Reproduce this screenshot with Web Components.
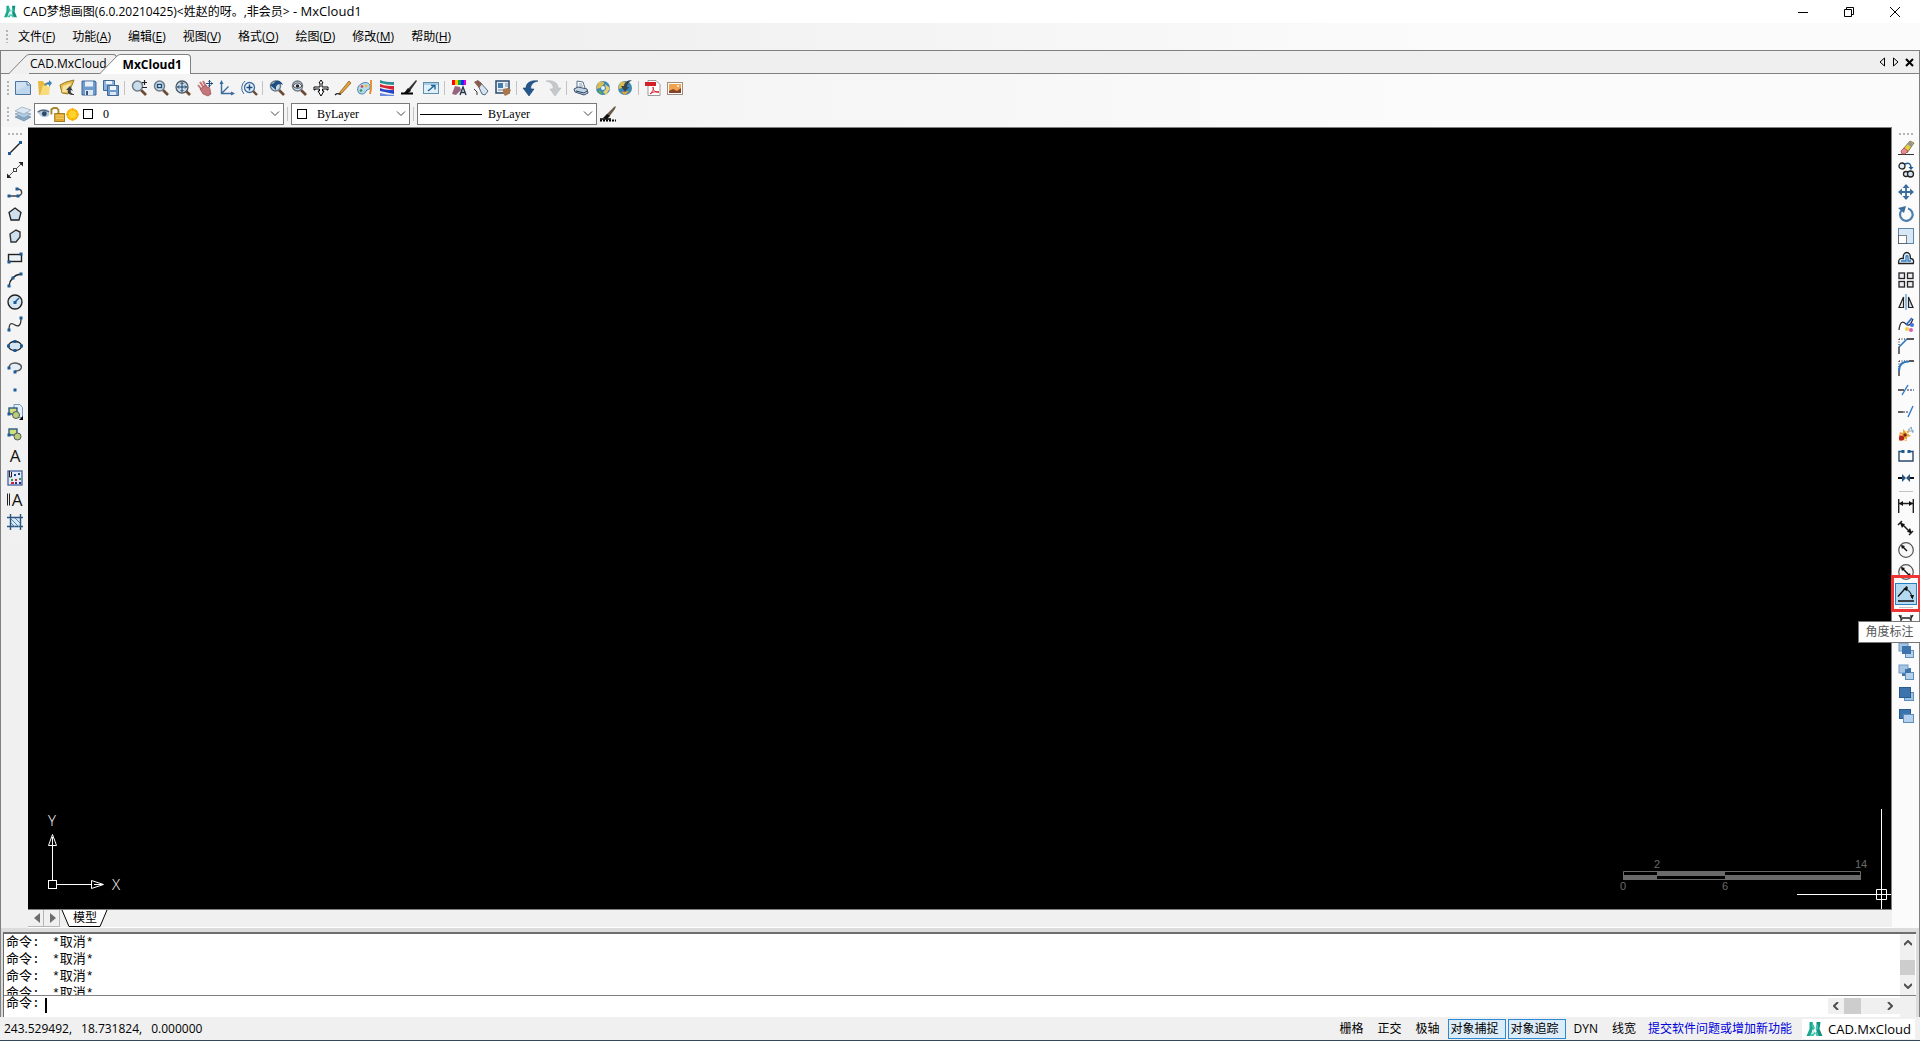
<!DOCTYPE html>
<html lang="zh-CN">
<head>
<meta charset="utf-8">
<title>CAD梦想画图</title>
<style>
  body {
    margin: 0;
    background: #f0f0f0;
    font-family: "Open Sans", "Noto Sans CJK SC", sans-serif;
    font-size: 12px;
    line-height: 16px;
    color: #000;
  }
</style>
</head>
<body>
<cad-app></cad-app>

<script>
// All icons are drawn on a 16x16 grid
const P = (x, y) => `<rect x="${x - 1.5}" y="${y - 1.5}" width="3" height="3" fill="#1d5b94"/>`;
const LENS = `<path d="M10 10l5 5" stroke="#6b4a32" stroke-width="2.6"/><circle cx="6.5" cy="6" r="5" fill="#c9dcea" stroke="#6f7c88" stroke-width="1.5"/>`;
const SHEETS = (a, b) => `<rect x="1" y="1" width="9" height="8" fill="${a}" stroke="#6d9ac6"/><rect x="7.5" y="8.5" width="8" height="7" fill="${b}" stroke="#5e8fbb"/>`;

const ICONS = {
  logo: `<path d="M3 1h3l1 5-3 9H0l3-7z" fill="#1aa890"/><path d="M10 1h4l-1 7 3 7h-4l-2-5z" fill="#14917f"/><path d="M6 1l6 14h-2L5 5zM11 3L4 15h3l5-8z" fill="#3cc2ab"/><path d="M7 2l2 5-3 6" stroke="#fff" stroke-width="1"/>`,
  new: `<path d="M.5 1.5h12l3 3v10H.5z" fill="#cfe2f4" stroke="#4f7499"/><path d="M1 11L13 5l2 1v8H1z" fill="#b3cfe8" opacity=".6"/><path d="M12 1.5v3.500h3.500" fill="#fff" stroke="#4f7499"/>`,
  open: `<path d="M1 1h5l1 2h3v12H2z" fill="#e7b93f"/><path d="M3 15l3-10 7 2-1 8z" fill="#f8dc7c"/><path d="M7 6c1-3 3-4 5-4V0l3 3-3 4V5c-2-1-3 0-5 1z" fill="#3f83b8"/>`,
  openWeb: `<path d="M1 5l6-3 8-2-2 5-4 9-6-1z" fill="#e4bd4b" stroke="#9b7a25"/><path d="M4 6l8-3-4 9-5 0z" fill="#f7e3a0"/><path d="M15 15c-5 0-7-2-6-5l-2 0 4-4 3 5-2-1c-1 2 1 4 3 4z" fill="#3a3f46"/>`,
  save: `<path d="M1 1h13l1 1v13H1z" fill="#6f9ccc" stroke="#3f6896"/><rect x="4" y="1.5" width="8" height="5" fill="#e8f1fa"/><rect x="4" y="10" width="8" height="5" fill="#dfe8f2"/><rect x="5" y="11" width="2" height="4" fill="#33577f"/>`,
  saveAll: `<path d="M.5.5h11v10H.5z" fill="#8fb4db" stroke="#3f6896"/><rect x="3" y="1" width="6" height="3" fill="#eef5fc"/><path d="M4.500 5.500h11v10h-11z" fill="#6f9ccc" stroke="#3f6896"/><rect x="7" y="6" width="6" height="4" fill="#eef5fc"/><rect x="7" y="12" width="6" height="3" fill="#dfe8f2"/>`,
  zoom: `${LENS}<path d="M13.500 0v5M11 2.500h5M11 7.500h5" stroke="#222" stroke-width="1.2"/>`,
  zoomWin: `${LENS}<rect x="4.5" y="4.5" width="4" height="3" fill="#fff" stroke="#1d4b7c" stroke-width="1.4"/>`,
  zoomAll: `<path d="M11 11l4 4" stroke="#6b4a32" stroke-width="2.6"/><circle cx="7" cy="7" r="6" fill="#c9dcea" stroke="#4d5964" stroke-width="1.3"/><path d="M7 2.500v9M2.500 7h9M5.500 4L7 2.500 8.500 4M5.500 10L7 11.500 8.500 10M4 5.500L2.500 7 4 8.500M10 5.500L11.500 7 10 8.500" stroke="#1d3f66"/>`,
  pan: `<path d="M1 5l4 5M3 2l4 6M6 1l3 6" stroke="#c5767a" stroke-width="2"/><path d="M3 9l6-4 1 2 2 0 1 2 1 5-3 2-5-2z" fill="#c5767a" stroke="#8b4347" stroke-width=".6"/><path d="M12.500 0v7M9 3.500h7" stroke="#1d4b7c"/><path d="M12.500 0l-1.500 2h3zM12.500 7l-1.500-2h3zM16 3.500l-2-1.500v3z" fill="#1d4b7c"/>`,
  ucs: `<path d="M2.500 2v11.500h12M2.500 13.500l7-7" stroke="#3c6d9f" stroke-width="1.4"/><path d="M2.500 0L.5 4h4zM16 13.500l-4-2v4z" fill="#3c6d9f"/>`,
  zoomIn: `<circle cx="8.5" cy="7.5" r="5" fill="#e8f3fc" stroke="#3c6d9f" stroke-width="1.3"/><path d="M12 11l4 4" stroke="#6b4a32" stroke-width="2.4"/><path d="M8.500 4.500v6M5.500 7.500h6" stroke="#1d4b7c" stroke-width="1.5"/><path d="M4 1a9 9 0 0 0-1 13" stroke="#3c6d9f"/>`,
  zoomPrev: `${LENS}<path d="M1 5l6 5V7c1-3 4-4 7-2-2-5-7-6-9-2z" fill="#1f4d80"/>`,
  zoomReal: `${LENS}<path d="M2 6c3-4 6-4 9 0-3 3-6 3-9 0z" fill="#eef" stroke="#444"/><circle cx="6.5" cy="6" r="1.7" fill="#222"/>`,
  move3d: `<path d="M8 0l2 3H9v4h6v3h-1V9H9.500v2H11l-3 5-3-5h1.500V9H2v1H1V7h6V3H6z" fill="#fff" stroke="#000"/>`,
  pencil: `<path d="M5 12L14 1l2 2-9 10-3 1z" fill="#e2a33b" stroke="#8f5d1d" stroke-width=".8"/><path d="M0 15c3-3 4 0 6-1" stroke="#222" stroke-width="1.3"/>`,
  palette: `<path d="M6 3c5-2 8 2 7 5 0 2-3 1-4 3-1 3-4 4-7 2C-1 9 1 5 6 3z" fill="#b6d8ee" stroke="#4c81a8"/><circle cx="5" cy="6.5" r="1.3" fill="#e33"/><circle cx="9" cy="6" r="1.3" fill="#f5b81d"/><circle cx="4" cy="10.5" r="1.3" fill="#2a9b4b"/><path d="M14 0v9l-1 5" stroke="#e08a2c" stroke-width="1.8"/>`,
  linetypes: `<path d="M1 0c5 2 9 2 14 2v3C10 5 6 4 1 3z" fill="#2e8f96"/><path d="M1 4c5 2 9 2 14 2v4C10 9 6 8 1 7z" fill="#d72332"/><path d="M1 8c5 2 9 2 14 2v4C10 13 6 12 1 11z" fill="#2646c9"/><path d="M1 13c5 1 9 2 14 2v1H1z" fill="#6a88e0"/>`,
  brush: `<path d="M7 9L15 0l1 1-7 10z" fill="#333"/><path d="M3 13l4-5 3 3-3 2z" fill="#111"/><path d="M0 13.500h12" stroke="#000" stroke-width="2"/>`,
  fit: `<rect x=".5" y="2.500" width="15" height="11" fill="#dff0f9" stroke="#5e8fae"/><path d="M1 4h14" stroke="#a9cde2" stroke-width="2"/><path d="M5 11l6-5M8 5.500h4v4" stroke="#1f6699" stroke-width="1.4"/>`,
  colors: `<path d="M1 0h3v5H1z" fill="#f00"/><path d="M4 0h3v5H4z" fill="#fc0"/><path d="M7 0h3v5H7z" fill="#0a4"/><path d="M10 0h3v5h-3z" fill="#22f"/><path d="M13 0h2v5h-2z" fill="#d0d"/><path d="M1 14l3-8 5 1 1 3-5 5z" fill="#94667d"/><path d="M9 15l3-8 3 8M10 12.500h4" stroke="#2a3550" stroke-width="1.4"/>`,
  dropper: `<path d="M4 3l3-1 8 9-3 4-3-1z" fill="#d5e4f0" stroke="#546a7f"/><path d="M1 2l4-2 4 4-3 4z" fill="#885d50"/><path d="M1 9l3 3v3" stroke="#333"/>`,
  props: `<rect x="1" y="1" width="13" height="12" fill="#e8eff5" stroke="#2a4a6b" stroke-width="1.5"/><rect x="3" y="3" width="5" height="5" fill="#477cb0"/><path d="M10 4h3M10 6h3M3 10h5" stroke="#7a8ea0"/><path d="M8 9l5-1 3 2-2 4-4 2-2-3z" fill="#aa774a"/>`,
  undo: `<path d="M15 1C9 0 3 2 3 8H0l6 8 5-7H8c-1-4 2-7 7-8z" fill="#24578d" stroke="#153e6b" stroke-width=".6"/>`,
  redo: `<path d="M1 1c6-1 12 1 12 7h3l-6 8-5-7h3c1-4-2-7-7-8z" fill="#c6c9cc" stroke="#b3b6b9" stroke-width=".6"/>`,
  print: `<path d="M4 8V1l6 1 2 6" fill="#fff" stroke="#56718f"/><path d="M1 9l4-2 9 2 1 4-4 2-9-3z" fill="#c3d3e4" stroke="#39526d"/><path d="M3 11l8 2 3-2" stroke="#253d58"/><path d="M6 4h3M6 6h4" stroke="#7e93a8"/>`,
  globe: `<circle cx="8" cy="8" r="7" fill="#3d87b3"/><path d="M3 3c4-3 7-1 6 1L5 8 1 9z" fill="#d9bd54"/><path d="M10 4l5 4-4 7-3-3 3-3z" fill="#e6cf73"/><path d="M4 9l4 5-4-1z" fill="#6aa94a"/><circle cx="8" cy="8" r="2" fill="#e9f4fa"/>`,
  globeOut: `<circle cx="8" cy="8" r="7" fill="#3d87b3"/><path d="M3 3c4-3 7-1 6 1L5 8 1 9z" fill="#d9bd54"/><path d="M4 12l8-1-4 4z" fill="#e6a33a"/><path d="M15 0c-5 0-8 3-8 6H4l4 6 4-5h-2c0-3 2-5 5-7z" fill="#38444c"/>`,
  pdf: `<path d="M3 .5h8l4 4v11H3z" fill="#fff" stroke="#9a9a9a"/><rect x="0" y="2" width="11" height="4" fill="#d51f26"/><path d="M5 14c3-3 4-5 3-7 0 4 3 6 6 5-4-1-6 0-9 2z" stroke="#d51f26"/>`,
  image: `<rect x=".5" y="2.500" width="15" height="12" fill="#fff" stroke="#9c8d7c"/><rect x="2" y="4" width="12" height="9" fill="#f1a350"/><path d="M2 13v-2l4-2 4 2 4-3v5z" fill="#86432b"/><circle cx="11" cy="6" r="1" fill="#fff"/>`,
  layers: `<path d="M0 11l7-3 9 3-7 4z" fill="#88a9c6" stroke="#5e7c96" stroke-width=".6"/><path d="M0 8l7-3 9 3-7 4z" fill="#b1cbe0" stroke="#6e8ca6" stroke-width=".6"/><path d="M0 5l7-4 9 3-7 4z" fill="#dbe8f2" stroke="#7e9cb6" stroke-width=".6"/>`,
  eye: `<path d="M0 5c4-4 9-5 15-2v6c-2 3-7 3-10 1z" fill="#b9cada"/><path d="M1 5c4-3 9-3 14 0" stroke="#526679" stroke-width="1.6"/><circle cx="9" cy="7" r="3" fill="#2d4a68"/>`,
  lock: `<path d="M1.500 8V2.500L4 1h3l2 2v4" stroke="#a8842a" stroke-width="2"/><rect x="5" y="7" width="10.5" height="8.5" fill="#e2a82c" stroke="#a4761b"/><path d="M6 9.500h9M6 12h9" stroke="#f6d877"/>`,
  sun: `<circle cx="8" cy="8" r="6" fill="#ffc400" stroke="#f6a400"/><path d="M8 1v14M1 8h14M3 3l10 10M13 3L3 13" stroke="#f6a400" stroke-width=".8"/><circle cx="8" cy="8" r="4" fill="#ffd22e"/>`,
  brushDots: `<path d="M6 9L14 1l2-1-1 3-6 8z" fill="#6b5a48"/><path d="M3 12l4-4 3 2-3 3z" fill="#111"/><path d="M0 13h11" stroke="#000" stroke-width="1.5"/><path d="M0 14.500h16" stroke="#000" stroke-width="2" stroke-dasharray="2 1"/>`,

  line: `<path d="M2 14L14 2" stroke="#222" stroke-width="1.4"/>${P(2.5, 13.5)}${P(13.5, 2.5)}`,
  xline: `<path d="M2 14L14 2" stroke="#555"/><path d="M0 16v-4.500L4.500 16zM16 0v4.500L11.500 0z" fill="#222"/><rect x="6.5" y="6.5" width="3" height="3" fill="#fff" stroke="#444"/>`,
  pline: `<path d="M2 12h9c5-1 5-7-1-7" stroke="#444" stroke-width="1.4"/>${P(2, 12)}${P(11, 12)}${P(10, 5)}`,
  polygon: `<path d="M8 2l6 4.500L12 14H4L2 6.500z" fill="#cfe0ef" stroke="#222" stroke-width="1.3"/>`,
  polygon2: `<path d="M3 6l6-4 4 2 0 5-4 5H4z" fill="#cfe0ef" stroke="#333" stroke-width="1.4"/>`,
  rect: `<rect x="1.5" y="4.5" width="13" height="7" fill="#eaf1f8" stroke="#222" stroke-width="1.4"/>${P(14, 4)}${P(2, 12)}`,
  arc: `<path d="M2 14C3 7 7 3 14 2" stroke="#222" stroke-width="1.3"/>${P(2, 14)}${P(6, 6)}${P(14, 2)}`,
  circle: `<circle cx="8" cy="8" r="7" fill="#d6e5f2" stroke="#222" stroke-width="1.4"/><path d="M8 8l4-4" stroke="#1d5b94" stroke-width="1.4"/>${P(8, 8.5)}`,
  spline: `<path d="M2 14c0-8 3-7 6-5s6 1 6-6" stroke="#333" stroke-width="1.3"/>${P(2, 14)}${P(14, 2)}`,
  ellipse: `<ellipse cx="8" cy="8" rx="6.5" ry="4.500" fill="#d6e5f2" stroke="#222" stroke-width="1.3"/>${P(8, 3.5)}${P(1.5, 8)}${P(8, 12.5)}${P(14.5, 8)}`,
  ellArc: `<path d="M2 8C2 3 8 2 12 4s3 7-4 7" fill="#e4eef7" stroke="#555" stroke-width="1.4"/>${P(2, 8)}${P(8, 12)}`,
  point: P(8, 8),
  insert: `<path d="M7 .5h6l2.500 3v10H7z" fill="#e6eff8" stroke="#6d97bf"/><rect x="2" y="4" width="8" height="6" fill="#cfe07d" stroke="#1f4d80" stroke-width="1.3"/><circle cx="9" cy="11" r="3.5" fill="#b7cf72" stroke="#556"/>${P(2, 10)}<path d="M16 12v4h-4z" fill="#000"/>`,
  block: `<rect x="2" y="3" width="8" height="6" fill="#cfe07d" stroke="#1f4d80" stroke-width="1.3"/><circle cx="10.5" cy="10.5" r="3.5" fill="#b7cf72" stroke="#556"/>${P(2, 9)}`,
  text: `<text x="8" y="14" text-anchor="middle" font-size="17" font-family="Open Sans" fill="#111">A</text>`,
  mtext: `<path d="M.5 1.500v12M2.500 1.500v12" stroke="#222"/><text x="10" y="14" text-anchor="middle" font-size="17" font-family="Open Sans" fill="#111">A</text>`,
  hatch: `<rect x="1" y="1" width="14" height="14" fill="#e5eaf8" stroke="#526aa2" stroke-width="1.4"/><path d="M2.500 1v6h2V2" stroke="#222"/><path d="M7 4h2v2H7zM11 3h2v2h-2z" fill="#13449a"/><path d="M4 9h2v2H4zM12 8h2v2h-2z" fill="#2c9a4b"/><path d="M8 9h2v2H8zM4 12h3v2H4z" fill="#d2222d"/><path d="M8 12h2v2H8zM12 12h2v2h-2z" fill="#2c2c9c"/>`,
  region: `<path d="M4 4h9v8H4z" fill="#dbe9f5"/><path d="M3.500 0v16M13.500 0v16M0 3.500h16M0 12.500h16" stroke="#2a5580" stroke-width="1.4"/><path d="M4 9l4 4M4 5l8 8M8 4l5 5" stroke="#4b86b8"/>`,

  erase: `<path d="M0 14.500h16" stroke="#333"/><path d="M5 9l7-8 4 2-7 10z" fill="#e7cd45" stroke="#77641f" stroke-width=".8"/><path d="M9 4l4 3 2-3-3-3z" fill="#8f979c"/><path d="M3 11l3-3 4 3-3 3H4z" fill="#e58d91" stroke="#a64b55" stroke-width=".8"/>`,
  copy: `<circle cx="4" cy="4" r="3" fill="#e5eef6" stroke="#222" stroke-width="1.3"/><circle cx="8" cy="12" r="2.5" fill="#e5eef6" stroke="#222" stroke-width="1.3"/><circle cx="12.5" cy="12" r="3" fill="#d0e1ef" stroke="#222" stroke-width="1.3"/><path d="M7 2c4-2 6 0 6 4" stroke="#1d5b94" stroke-width="1.5"/><path d="M10.500 5h5L13 8z" fill="#1d5b94"/>`,
  move: `<path d="M8 1v14M1 8h14" stroke="#3b6d9d" stroke-width="1.8"/><path d="M8 0L4.500 4h7zM8 16l-3.500-4h7zM0 8l4-3.500v7zM16 8l-4-3.500v7z" fill="#3b6d9d"/>`,
  rotate: `<path d="M10 2.500a6.300 6.300 0 1 1-6 1.500" stroke="#4b7fae" stroke-width="2.2"/><path d="M0 2l8-2-2 7z" fill="#3b6d9d"/>`,
  scale: `<rect x=".5" y=".5" width="15" height="15" fill="#d9e8f5" stroke="#5b86ad"/><rect x=".5" y="7.500" width="8" height="8" fill="#fff" stroke="#111" stroke-dasharray="1 1"/>`,
  offset: `<path d="M.7 13.500h14.600c1-4-1-5-3-5 1-8-8-8-7 0-4-1-5 2-4.600 5z" fill="#e1eff9" stroke="#222" stroke-width="1.3"/><path d="M3 11h5V6.500c0-1 2-1 2 0V11h3" stroke="#2f79c4" stroke-width="1.3"/>`,
  array: `<g fill="#e9edf2" stroke="#222" stroke-width="1.3"><rect x="1" y="1" width="5.5" height="5.5"/><rect x="9.5" y="1" width="5.5" height="5.5"/><rect x="1" y="9.5" width="5.5" height="5.5"/><rect x="9.5" y="9.5" width="5.5" height="5.5"/></g>`,
  mirror: `<path d="M5.500 3v10.500H1z" fill="#e9edf2" stroke="#222" stroke-width="1.2"/><path d="M10.500 3v10.500H15z" fill="#d4dee8" stroke="#222" stroke-width="1.2"/><path d="M8 0v16" stroke="#2779c2"/>`,
  splineEdit: `<path d="M1 14C2 5 5 5 8 8s5 0 7-5" stroke="#333" stroke-width="1.3"/><path d="M8 9l6-7" stroke="#2f6bd0" stroke-width="1.8"/><circle cx="9" cy="13" r="2" fill="#f0d23b"/><circle cx="13" cy="14" r="2" fill="#df58b2"/><circle cx="14" cy="9" r="2" fill="#3e74dc"/>`,
  chamfer: `<path d="M1 1h9M1 1v8" stroke="#111" stroke-dasharray="1 1.5"/><path d="M1 16V9M9 1h7" stroke="#222" stroke-width="1.3"/><path d="M1 9l8-8" stroke="#2f79c4" stroke-width="1.7"/>`,
  fillet: `<path d="M1 1h9M1 1v8" stroke="#111" stroke-dasharray="1 1.5"/><path d="M1 16v-5M11 1h5" stroke="#222" stroke-width="1.3"/><path d="M1 11C1 5 4 1.500 11 1.500" stroke="#2f79c4" stroke-width="1.9"/>`,
  trim: `<path d="M0 8h6" stroke="#111" stroke-width="1.3"/><path d="M9 8h7" stroke="#226" stroke-dasharray="2 1"/><path d="M4 13L10 3" stroke="#2f79c4" stroke-width="1.4"/>`,
  extend: `<path d="M0 8h5" stroke="#111" stroke-width="1.3"/><path d="M5 8h6" stroke="#226" stroke-dasharray="2 1"/><path d="M10 13l5-11" stroke="#2f79c4" stroke-width="1.4"/>`,
  explode: `<path d="M1 10l1-4 3 1 0-4 3 3 4-3-2 5 3 2-4 1 0 4-4-1-4 1z" fill="#f0a23a"/><path d="M3 8l1 2M8 6l2 2M6 13l3 1" stroke="#fff3c4"/><circle cx="3.500" cy="12" r="2.6" fill="#b5231d"/><circle cx="7" cy="9" r="1.700" fill="#6e2c1c"/><path d="M10 4l4-3M11 5l5 0M13 1l2 6" stroke="#7ba8cf"/>`,
  break: `<path d="M5 3.500H1v9.500h14V3.500h-4" stroke="#2b4a6b" stroke-width="1.4"/>${P(5, 3.5)}${P(11, 3.5)}`,
  join: `<path d="M0 8h4M12 8h4" stroke="#111" stroke-width="2"/><path d="M4 4l4 4-4 4zM12 4L8 8l4 4z" fill="#26567f"/>`,
  dimLinear: `<path d="M.7 1v14M15.300 1v14M1 5.500h14" stroke="#222" stroke-width="1.4"/><path d="M1 5.500l4-2.500v5zM15 5.500L11 3v5z" fill="#111"/>`,
  dimAligned: `<path d="M0 5l4-4M11 15l4-4M3 3l10 10" stroke="#222" stroke-width="1.5"/><path d="M2 3l5 1-3 4zM14 13l-5-1 3-4z" fill="#111"/>`,
  dimRadius: `<circle cx="8" cy="8" r="7.300" fill="#f7f7f7" stroke="#555" stroke-width="1.2"/><path d="M9 9L4 4" stroke="#111" stroke-width="1.4"/><path d="M3 3l4 1-3 3z" fill="#111"/>`,
  dimDiameter: `<circle cx="8" cy="8" r="7.300" fill="#f7f7f7" stroke="#555" stroke-width="1.2"/><path d="M4 4l8 8" stroke="#111" stroke-width="1.4"/><path d="M3 3l4 1-3 3zM13 13l-4-1 3-3z" fill="#111"/>`,
  dimAngular: `<path d="M0 15h16M0 10.500L9 .5" stroke="#111" stroke-width="1.3"/><path d="M7 3c4 1 6.500 4 7 9" stroke="#222" stroke-width="1.2"/><path d="M5 3l5-2-1 4zM12 9l4 0-1.500 4.500z" fill="#111"/>`,
  dimEdit: `<path d="M1 1l3 5M15 1l-3 5M4 4h8M3 1v12M13 1v12" stroke="#222" stroke-width="1.3"/>`,
  front: SHEETS('#a6c4e1', '#b4d0ea') + `<path d="M4 4h9v8H4z" fill="#3e74ac"/>`,
  back: `<path d="M4 4h9v8H4z" fill="#3e74ac"/>` + SHEETS('#a6c4e1', '#b4d0ea') + `<path d="M7 5h5v4H7z" fill="#3e74ac"/>`,
  above: `<rect x="6.5" y="6.500" width="9" height="8" fill="#9fc3e4" stroke="#5e8fbb"/><rect x="1.5" y="1.500" width="11" height="10" fill="#3e74ac" stroke="#2b5c91"/>`,
  below: `<rect x="1.5" y="1.500" width="11" height="9" fill="#3e74ac" stroke="#2b5c91"/><rect x="5.5" y="6.500" width="10" height="8" fill="#b4d0ea" stroke="#5e8fbb"/>`
};

class CadIcon extends HTMLElement {
  connectedCallback() {
    this.attachShadow({ mode: 'open' }).innerHTML = /*html*/`
      <style>
        :host { display: block; flex: none; width: 16px; height: 16px; }
        svg { display: block; width: 100%; height: 100%; overflow: visible; }
      </style>
      <svg viewBox="0 0 16 16" fill="none" aria-hidden="true">${ICONS[this.getAttribute('name')]}</svg>
    `;
  }
}
customElements.define('cad-icon', CadIcon);

class CadTool extends HTMLElement {
  connectedCallback() {
    const tip = this.getAttribute('tip');
    this.attachShadow({ mode: 'open' }).innerHTML = /*html*/`
      <style>
        :host { display: block; flex: none; position: relative; width: 22px; height: 22px; }
        button {
          display: flex; align-items: center; justify-content: center;
          width: 100%; height: 100%; padding: 0;
          border: 1px solid transparent; background: none;
        }
        :host([active]) { z-index: 2; }
        :host([active]) button { background: #b5d9f0; border-color: #2a7fc0; }
        .mark {
          position: absolute; inset: -8px -4px -7px -4px;
          border: 3px solid #ee3434; pointer-events: none;
        }
        .tip {
          position: absolute; top: 38px; right: -4px;
          padding: 2px 6px; border: 1px solid #767676;
          background: #fff; color: #575757; white-space: nowrap;
        }
      </style>
      <button type="button" aria-label="${this.getAttribute('icon')}"><cad-icon name="${this.getAttribute('icon')}"></cad-icon></button>
      ${tip ? `<div class="mark"></div><div class="tip" role="tooltip">${tip}</div>` : ''}
    `;
  }
}
customElements.define('cad-tool', CadTool);

// tools="a b | c" : names of the icons, a bar stands for a separator
class CadToolbar extends HTMLElement {
  connectedCallback() {
    const items = (this.getAttribute('tools') || '').split(' ').filter(Boolean).map(name => {
      if (name === '|') return '<i></i>';
      if (name === this.getAttribute('active')) {
        return `<cad-tool icon="${name}" active tip="${this.getAttribute('tip')}"></cad-tool>`;
      }
      return `<cad-tool icon="${name}"></cad-tool>`;
    }).join('');
    this.attachShadow({ mode: 'open' }).innerHTML = /*html*/`
      <style>
        :host { display: flex; align-items: center; padding-left: 6px; }
        :host([vertical]) { flex-direction: column; padding: 6px 0 0; }
        .grip {
          flex: none; width: 2px; height: 15px; margin-right: 3px;
          background: repeating-linear-gradient(#b4b4b4 0 2px, transparent 2px 4px);
        }
        i { flex: none; width: 1px; height: 14px; margin: 0 3px 0 2px; background: #c3c3c3; }
        :host([vertical]) .grip {
          width: 14px; height: 2px; margin: 0 0 2px;
          background: repeating-linear-gradient(90deg, #b4b4b4 0 2px, transparent 2px 4px);
        }
        :host([vertical]) i { width: 14px; height: 1px; margin: 2px 0 3px; }
      </style>
      <span class="grip"></span>${items}<slot></slot>
    `;
  }
}
customElements.define('cad-toolbar', CadToolbar);

class CadCombo extends HTMLElement {
  connectedCallback() {
    this.attachShadow({ mode: 'open' }).innerHTML = /*html*/`
      <style>
        :host {
          display: flex; align-items: center; box-sizing: border-box;
          height: 22px; padding: 0 3px 0 2px;
          border: 1px solid #7a7a7a; background: #fff;
        }
        select {
          appearance: none; flex: 1; min-width: 0; height: 20px; padding: 0;
          border: 0; background: none; color: #000;
          font: 12px "Liberation Serif", serif;
        }
        svg { flex: none; pointer-events: none; }
      </style>
      <slot></slot>
      <select aria-label="${this.getAttribute('label')}"><option>${this.getAttribute('value')}</option></select>
      <svg width="10" height="6" fill="none" stroke="#444"><path d="M1 .5l4 4 4-4"/></svg>
    `;
  }
}
customElements.define('cad-combo', CadCombo);

class CadTitlebar extends HTMLElement {
  connectedCallback() {
    this.attachShadow({ mode: 'open' }).innerHTML = /*html*/`
      <style>
        :host { display: flex; align-items: center; height: 23px; padding-left: 4px; background: #fff; }
        cad-icon { width: 13px; height: 13px; margin-right: 6px; }
        h1 { flex: 1; margin: 0; font-size: 12px; font-weight: 400; }
        .doc { font-size: 13px; }
        button {
          display: flex; align-items: center; justify-content: center;
          width: 46px; height: 22px; padding: 0; border: 0; background: none;
        }
        .win { display: flex; padding-right: 2px; }
      </style>
      <cad-icon name="logo"></cad-icon>
      <h1><slot></slot><span class="doc"> - ${this.getAttribute('doc')}</span></h1>
      <div class="win">
        <button type="button" aria-label="最小化"><svg width="10" height="10" stroke="#000"><path d="M0 5.500h10"/></svg></button>
        <button type="button" aria-label="还原"><svg width="10" height="10" stroke="#000" fill="none"><path d="M.5 2.500h7v7h-7zM2.500 2V.5h7v7H8"/></svg></button>
        <button type="button" aria-label="关闭"><svg width="10" height="10" stroke="#000"><path d="M0 0l10 10M10 0L0 10"/></svg></button>
      </div>
    `;
  }
}
customElements.define('cad-titlebar', CadTitlebar);

class CadMenubar extends HTMLElement {
  connectedCallback() {
    const menus = ['文件 F', '功能 A', '编辑 E', '视图 V', '格式 O', '绘图 D', '修改 M', '帮助 H'];
    this.attachShadow({ mode: 'open' }).innerHTML = /*html*/`
      <style>
        :host {
          display: flex; align-items: center; height: 27px; padding-left: 6px;
          background: linear-gradient(90deg, #f0f0f0 30%, #fbfbfb 75%);
        }
        .grip {
          width: 2px; height: 13px; margin-right: 10px;
          background: repeating-linear-gradient(#b4b4b4 0 2px, transparent 2px 4px);
        }
        nav { display: flex; gap: 17px; }
        button { padding: 0; border: 0; background: none; font: inherit; color: inherit; }
      </style>
      <span class="grip"></span>
      <nav>${menus.map(m => {
        const [name, key] = m.split(' ');
        return `<button type="button">${name}(<u>${key}</u>)</button>`;
      }).join('')}</nav>
    `;
  }
}
customElements.define('cad-menubar', CadMenubar);

class CadTab extends HTMLElement {
  connectedCallback() {
    const fill = this.hasAttribute('active') ? '#fff' : '#f0f0f0';
    this.attachShadow({ mode: 'open' }).innerHTML = /*html*/`
      <style>
        :host { display: flex; height: 19px; }
        :host([active]) { position: relative; height: 20px; margin: 0 0 -1px -17px; font-weight: 700; }
        svg { flex: none; }
        button {
          box-sizing: border-box; height: 100%; padding: 0 9px 0 1px;
          border: solid #808080; border-width: 1px 1px 0 0; border-radius: 0 4px 0 0;
          background: ${fill}; font: inherit; color: inherit;
        }
        :host([active]) button { padding: 0 8px 0 3px; }
      </style>
      <svg width="20" height="20"><path d="M0 20L17 2q2-1.500 3-1.500V20z" fill="${fill}"/><path d="M0 19.500L17 2q2-1.500 3-1.500" fill="none" stroke="#808080"/></svg>
      <button type="button"><slot></slot></button>
    `;
  }
}
customElements.define('cad-tab', CadTab);

class CadTabbar extends HTMLElement {
  connectedCallback() {
    this.attachShadow({ mode: 'open' }).innerHTML = /*html*/`
      <style>
        :host {
          display: flex; align-items: flex-end; box-sizing: border-box; height: 23px;
          padding: 0 4px 0 8px; background: #efefef; border-bottom: 1px solid #808080;
        }
        .nav { display: flex; gap: 4px; margin-left: auto; align-self: center; }
        button { display: flex; padding: 0; border: 0; background: none; }
      </style>
      <slot></slot>
      <div class="nav">
        <button type="button" aria-label="上一个"><svg width="10" height="10" fill="none" stroke="#000"><path d="M7.500 1v8L3 5z"/></svg></button>
        <button type="button" aria-label="下一个"><svg width="10" height="10" fill="none" stroke="#000"><path d="M2.500 1v8L7 5z"/></svg></button>
        <button type="button" aria-label="关闭标签"><svg width="10" height="10" stroke="#000" stroke-width="2"><path d="M1 2l7 7M8 2L1 9"/></svg></button>
      </div>
    `;
  }
}
customElements.define('cad-tabbar', CadTabbar);

// Drawing area: coordinate axes, scale bar and crosshair on a free canvas
class CadCanvas extends HTMLElement {
  connectedCallback() {
    this.attachShadow({ mode: 'open' }).innerHTML = /*html*/`
      <style>
        :host {
          display: block; position: relative; overflow: hidden; background: #000;
          border: solid #808080; border-width: 1px 1px 1px 0;
        }
        svg { position: absolute; bottom: 0; }
        .axes { left: 0; }
        .scale { right: 0; }
        .axes text { font: 300 15px "Open Sans", sans-serif; }
        .scale text { font: 11px "Liberation Sans", sans-serif; }
      </style>
      <svg class="axes" width="110" height="110" fill="none" stroke="#fff">
        <rect x="20.5" y="81.5" width="8" height="8"/>
        <path d="M24.500 81V47M29 85.500h35M24.500 35.500l-4 11h8zM75.500 85.500l-12-4v8zM24.500 38v8M66 85.500h9"/>
        <text x="24" y="27" text-anchor="middle" fill="#fff" stroke="none">Y</text>
        <text x="88" y="91" text-anchor="middle" fill="#fff" stroke="none">X</text>
      </svg>
      <svg class="scale" width="280" height="110">
        <g fill="#6b6b6b" text-anchor="middle">
          <path d="M12 76h34v5H12zM46 72h68v5H46zM114 76h136v5H114z"/>
          <path d="M12.500 72.500h237v8h-237z" fill="none" stroke="#6b6b6b"/>
          <text x="46" y="69">2</text><text x="250" y="69">14</text>
          <text x="12" y="91">0</text><text x="114" y="91">6</text>
        </g>
        <path d="M270.500 10v100M186 95.500h94M265.500 90.500h10v10h-10z" fill="none" stroke="#fff"/>
      </svg>
    `;
  }
}
customElements.define('cad-canvas', CadCanvas);

class CadSheets extends HTMLElement {
  connectedCallback() {
    this.attachShadow({ mode: 'open' }).innerHTML = /*html*/`
      <style>
        :host { display: flex; height: 17px; background: #f0f0f0; border-bottom: 1px solid #fff; }
        button { padding: 0; border: 0; background: none; font: inherit; color: inherit; }
        .arrow {
          display: flex; align-items: center; justify-content: center; box-sizing: border-box;
          width: 16px; padding-left: 3px; border: solid #b5b5b5; border-width: 0 1px 1px 0;
        }
        .sheet { display: flex; line-height: 16px; }
        .sheet span { box-sizing: border-box; height: 17px; padding: 0 1px 0 3px; background: #fff; border-bottom: 1px solid #000; }
      </style>
      <button class="arrow" type="button" aria-label="向左"><svg width="6" height="10" fill="#6d6d6d"><path d="M6 0v10L0 5z"/></svg></button>
      <button class="arrow" type="button" aria-label="向右"><svg width="6" height="10" fill="#6d6d6d"><path d="M0 0v10l6-5z"/></svg></button>
      <button class="sheet" type="button">
        <svg width="10" height="17"><path d="M2 0l7 17h1V0z" fill="#fff"/><path d="M2 0l7 16.500h1" fill="none" stroke="#000"/></svg><span><slot></slot></span><svg width="10" height="17"><path d="M0 0h9L2 17H0z" fill="#fff"/><path d="M9 0L2 16.500H0" fill="none" stroke="#000"/></svg>
      </button>
    `;
  }
}
customElements.define('cad-sheets', CadSheets);

class CadCommand extends HTMLElement {
  connectedCallback() {
    this.attachShadow({ mode: 'open' }).innerHTML = /*html*/`
      <style>
        :host {
          display: block; padding: 4px 3px 0 2px; background: #dcdcdc;
          font-family: "Liberation Mono", "Noto Sans CJK SC", monospace; font-size: 13px;
        }
        .box { border: solid #6e6e6e; border-width: 2px 0 0 1px; background: #fff; }
        .log { display: flex; height: 61px; border-bottom: 1px solid #808080; }
        .lines { flex: 1; overflow: hidden; padding-left: 2px; }
        p { display: flex; margin: 0; line-height: 17px; }
        b { width: 46px; font-weight: 400; }
        .v { display: flex; flex-direction: column; align-items: center; width: 15px; margin-right: 1px; background: #f0f0f0; }
        .v svg { margin: 6px 0; }
        .v i { width: 15px; height: 17px; margin: 8px 0 2px; background: #cdcdcd; }
        .entry { display: flex; height: 21px; }
        label { width: 39px; padding-left: 2px; line-height: 16px; }
        .caret { width: 2px; height: 15px; margin-top: 2px; background: #000; }
        input { flex: 1; min-width: 0; padding: 0; border: 0; outline: 0; font: inherit; background: none; }
        .h { display: flex; align-items: center; width: 72px; height: 16px; margin-top: 2px; background: #f0f0f0; }
        .h svg { margin: 0 5px; }
        .h i { width: 17px; height: 16px; margin-right: 21px; background: #cdcdcd; }
        .corner { width: 16px; background: #f0f0f0; }
      </style>
      <div class="box">
        <div class="log">
          <div class="lines">${'<p><b>命令:</b><span>*取消*</span></p>'.repeat(4)}</div>
          <div class="v">
            <svg width="8" height="6" fill="none" stroke="#505050" stroke-width="2"><path d="M0 5l4-4 4 4"/></svg>
            <i></i>
            <svg width="8" height="6" fill="none" stroke="#505050" stroke-width="2"><path d="M0 1l4 4 4-4"/></svg>
          </div>
        </div>
        <div class="entry">
          <label for="cmd">命令:</label><span class="caret"></span><input id="cmd" type="text">
          <div class="h">
            <svg width="6" height="8" fill="none" stroke="#505050" stroke-width="2"><path d="M5 0L1 4l4 4"/></svg>
            <i></i>
            <svg width="6" height="8" fill="none" stroke="#505050" stroke-width="2"><path d="M1 0l4 4-4 4"/></svg>
          </div>
          <div class="corner"></div>
        </div>
      </div>
    `;
  }
}
customElements.define('cad-command', CadCommand);

class CadStatus extends HTMLElement {
  connectedCallback() {
    this.attachShadow({ mode: 'open' }).innerHTML = /*html*/`
      <style>
        :host {
          display: flex; align-items: center; box-sizing: border-box; height: 24px;
          padding: 0 5px 0 4px; border-bottom: 1px solid #34495a; background: #f0f0f0;
        }
        .pos { flex: 1; display: flex; gap: 9px; }
        button {
          box-sizing: border-box; height: 20px; padding: 0 5px; margin: 0 1px;
          border: 1px solid transparent; background: none;
          font: inherit; line-height: 16px; color: inherit; white-space: nowrap;
        }
        button[aria-pressed=true] { padding: 0 6px 0 2px; border-color: #2a8ad4; background: #dcecf8; }
        a { margin: 0 10px 0 5px; color: #00d; text-decoration: none; }
        .brand { display: flex; align-items: center; gap: 5px; height: 20px; padding: 0 4px; background: #fff; font-size: 13px; }
        .brand cad-icon { width: 17px; }
      </style>
      <div class="pos"><span>243.529492,</span><span>18.731824,</span><span>0.000000</span></div>
      <button type="button">栅格</button>
      <button type="button">正交</button>
      <button type="button">极轴</button>
      <button type="button" aria-pressed="true">对象捕捉</button>
      <button type="button" aria-pressed="true">对象追踪</button>
      <button type="button">DYN</button>
      <button type="button">线宽</button>
      <a href="#">提交软件问题或增加新功能</a>
      <span class="brand"><cad-icon name="logo"></cad-icon>CAD.MxCloud</span>
    `;
  }
}
customElements.define('cad-status', CadStatus);

class CadApp extends HTMLElement {
  connectedCallback() {
    this.attachShadow({ mode: 'open' }).innerHTML = /*html*/`
      <style>
        :host { display: flex; flex-direction: column; height: 100vh; }
        .frame {
          flex: 1; min-height: 0; display: flex; flex-direction: column;
          border: 1px solid #808080; border-bottom: 0; background: #f0f0f0;
        }
        .bars { padding-bottom: 1px; background: linear-gradient(90deg, #f4f4f4 30%, #fbfbfb 75%); }
        .std { height: 28px; }
        .layer { height: 24px; }
        .main { flex: 1; min-height: 0; display: flex; }
        .left { width: 27px; background: linear-gradient(#f8f8f8, #f0f0f0 420px); }
        .right { width: 27px; background: #fbfbfb; }
        .view { flex: 1; min-width: 0; display: flex; flex-direction: column; }
        cad-canvas { flex: 1; }
        .c1 { width: 250px; }
        .c2 { width: 119px; }
        .c3 { width: 180px; }
        .sep { width: 1px; height: 14px; margin: 0 3px; background: #c3c3c3; }
        .c1 cad-icon { width: 15px; height: 15px; }
        .c1 cad-icon:first-child { width: 13px; height: 13px; }
        .swatch { box-sizing: border-box; flex: none; width: 10px; height: 10px; margin: 0 10px 0 3px; border: 1px solid #000; }
        .stroke { flex: none; width: 62px; height: 1px; margin-right: 6px; background: #000; }
      </style>
      <cad-titlebar doc="MxCloud1">CAD梦想画图(6.0.20210425)&lt;姓赵的呀。,非会员&gt;</cad-titlebar>
      <cad-menubar></cad-menubar>
      <div class="frame">
        <cad-tabbar><cad-tab>CAD.MxCloud</cad-tab><cad-tab active>MxCloud1</cad-tab></cad-tabbar>
        <div class="bars">
          <cad-toolbar class="std" tools="new open openWeb save saveAll | zoom zoomWin zoomAll pan ucs zoomIn | zoomPrev zoomReal move3d pencil palette linetypes brush fit | colors dropper props | undo redo | print globe globeOut | pdf image"></cad-toolbar>
          <cad-toolbar class="layer" tools="layers">
            <cad-combo class="c1" label="图层" value="0">
              <cad-icon name="eye"></cad-icon><cad-icon name="lock"></cad-icon><cad-icon name="sun"></cad-icon><span class="swatch"></span>
            </cad-combo>
            <span class="sep"></span>
            <cad-combo class="c2" label="颜色" value="ByLayer"><span class="swatch"></span></cad-combo>
            <span class="sep"></span>
            <cad-combo class="c3" label="线型" value="ByLayer"><span class="stroke"></span></cad-combo>
            <cad-tool icon="brushDots"></cad-tool>
          </cad-toolbar>
        </div>
        <div class="main">
          <cad-toolbar class="left" vertical tools="line xline pline polygon polygon2 rect arc circle spline ellipse ellArc point insert block text hatch mtext region"></cad-toolbar>
          <div class="view">
            <cad-canvas></cad-canvas>
            <cad-sheets>模型</cad-sheets>
          </div>
          <cad-toolbar class="right" vertical active="dimAngular" tip="角度标注" tools="erase copy move rotate scale offset array mirror splineEdit chamfer fillet trim extend explode break join | dimLinear dimAligned dimRadius dimDiameter dimAngular | dimEdit | front back above below"></cad-toolbar>
        </div>
        <cad-command></cad-command>
      </div>
      <cad-status></cad-status>
    `;
  }
}
customElements.define('cad-app', CadApp);
</script>
</body>
</html>
